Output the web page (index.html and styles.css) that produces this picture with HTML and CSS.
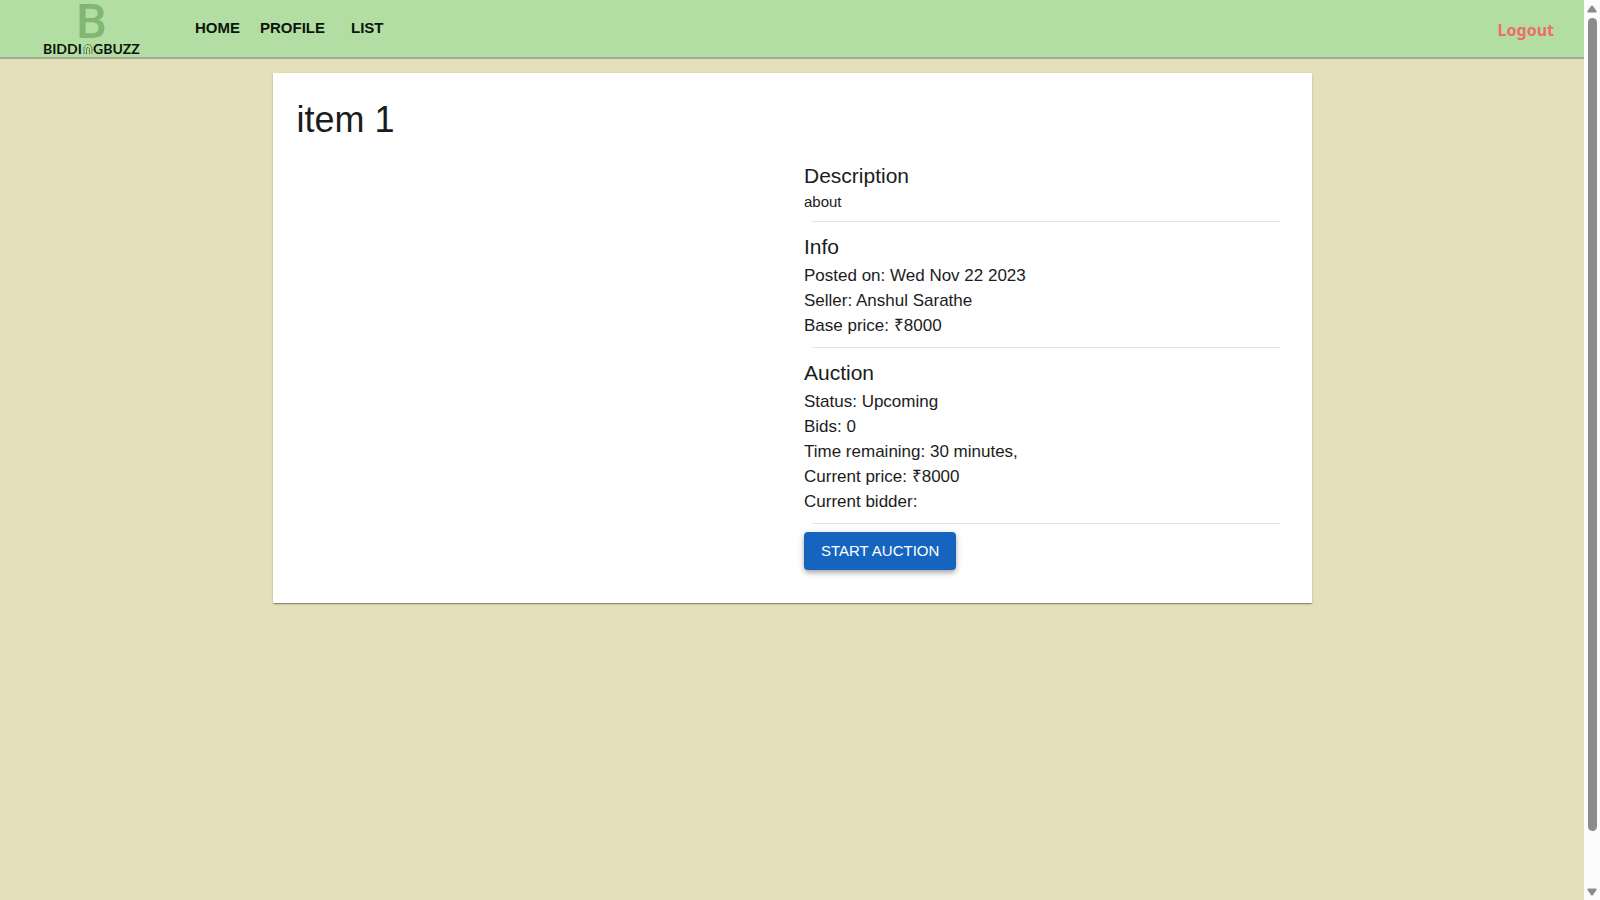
FILE: index.html
```html
<!DOCTYPE html>
<html lang="en">
<head>
<meta charset="utf-8">
<title>BiddingBuzz</title>
<link rel="stylesheet" href="styles.css">
</head>
<body>
<div class="page">
  <header class="topbar">
    <a class="brand" href="#" aria-label="BiddingBuzz">
      <svg class="logo" viewBox="0 0 100 56" width="100" height="56">
        <text class="logo-letter" x="33" y="38">B</text>
        <text class="logo-name" x="0" y="54">BIDDI</text>
        <path d="M41 54V48.500a4 4 0 0 1 8 0V54M43.500 54V49a1.500 1.500 0 0 1 3 0v5" fill="none" stroke="#48663f" stroke-width="1" stroke-dasharray="2 0.600"/>
        <text class="logo-name" x="50" y="54">GBUZZ</text>
      </svg>
    </a>
    <nav class="nav">
      <a href="#">HOME</a>
      <a href="#">PROFILE</a>
      <a class="nav-list" href="#">LIST</a>
    </nav>
    <button class="logout" type="button">Logout</button>
  </header>
  <main class="card">
    <h1 class="title">item 1</h1>
    <div class="columns">
      <div class="picture"></div>
      <div class="details">
        <h2 class="heading">Description</h2>
        <p class="about">about</p>
        <hr class="rule">
        <h2 class="heading">Info</h2>
        <p class="line">Posted on: Wed Nov 22 2023</p>
        <p class="line">Seller: Anshul Sarathe</p>
        <p class="line">Base price: ₹8000</p>
        <hr class="rule">
        <h2 class="heading">Auction</h2>
        <p class="line">Status: Upcoming</p>
        <p class="line">Bids: 0</p>
        <p class="line">Time remaining: 30 minutes,</p>
        <p class="line">Current price: ₹8000</p>
        <p class="line">Current bidder:</p>
        <hr class="rule">
        <button class="start" type="button">START AUCTION</button>
      </div>
    </div>
  </main>
</div>
<div class="scrollbar" aria-hidden="true">
  <svg width="10" height="8" viewBox="0 0 10 8"><path d="M5 0.500Q5.600 0.500 6 1L9.500 6Q10 7.500 9 7.500H1Q0 7.500 0.500 6L4 1Q4.400 0.500 5 0.500Z" fill="#8b8b8b"/></svg>
  <div class="track"><div class="thumb"></div></div>
  <svg width="10" height="8" viewBox="0 0 10 8"><path d="M5 7.500Q5.600 7.500 6 7L9.500 2Q10 0.500 9 0.500H1Q0 0.500 0.500 2L4 7Q4.400 7.500 5 7.500Z" fill="#8b8b8b"/></svg>
</div>
</body>
</html>
```
FILE: styles.css
```css
* {
  box-sizing: border-box;
}

body {
  margin: 0;
  min-height: 100vh;
  display: flex;
  background: #e3e0ba;
  color: #1c1c1c;
  font-family: "Liberation Sans", Arial, sans-serif;
}

.page {
  flex: 1;
}

.topbar {
  display: flex;
  align-items: center;
  padding: 0 30px 0 43px;
  background: #b3dea3;
  border-bottom: 2px solid #a3aa9c;
}

.brand {
  display: flex;
  height: 57px;
}

.logo {
  overflow: visible;
}

.logo-letter {
  font: 500 49px Roboto, sans-serif;
  fill: #82b673;
}

.logo-name {
  font: 700 14px Lato, sans-serif;
  fill: #0c150a;
}

.nav {
  display: flex;
  gap: 20px;
  margin: 0 0 2px 52px;
}

.nav a {
  color: #0c150a;
  font-size: 15px;
  font-weight: 700;
  line-height: 20px;
  text-decoration: none;
}

.nav .nav-list {
  margin-left: 6px;
}

.logout {
  margin: 3px 0 0 auto;
  padding: 0;
  border: 0;
  background: none;
  color: #ed6d69;
  font: 700 16px "Noto Sans", sans-serif;
}

.card {
  width: calc(100% - 32px);
  max-width: 1039px;
  margin: 14px auto;
  padding: 24px;
  background: #fff;
  box-shadow: 0 2px 1px -1px rgba(0, 0, 0, 0.2), 0 1px 1px rgba(0, 0, 0, 0.14), 0 1px 3px rgba(0, 0, 0, 0.12);
}

.title {
  margin: 0 0 16px;
  font-size: 36px;
  font-weight: 400;
  line-height: 46px;
}

.columns {
  display: grid;
  grid-template-columns: 1fr 1fr;
  gap: 24px;
}

.heading {
  margin: 0;
  font-size: 21px;
  font-weight: 400;
  line-height: 33px;
}

.about {
  margin: 0;
  font-size: 15px;
  line-height: 20px;
}

.line {
  margin: 0;
  font-size: 17px;
  line-height: 25px;
}

.rule {
  height: 1px;
  margin: 9px 8px 8px;
  border: 0;
  background: #e4e4e4;
}

.start {
  display: block;
  height: 38px;
  margin-bottom: 9px;
  padding: 0 17px 2px;
  border: 0;
  border-radius: 4px;
  background: #1565c0;
  box-shadow: 0 2px 4px -1px rgba(0, 0, 0, 0.2), 0 4px 5px rgba(0, 0, 0, 0.14), 0 1px 10px rgba(0, 0, 0, 0.12);
  color: #fff;
  font: 15px "Liberation Sans", Arial, sans-serif;
}

.scrollbar {
  width: 16px;
  display: flex;
  flex-direction: column;
  align-items: center;
  gap: 5px;
  padding: 5px 0 4px;
  background: #fcfcfc;
}

.track {
  flex: 1;
}

.thumb {
  width: 9px;
  height: 94%;
  border-radius: 5px;
  background: #8b8b8b;
}
```
